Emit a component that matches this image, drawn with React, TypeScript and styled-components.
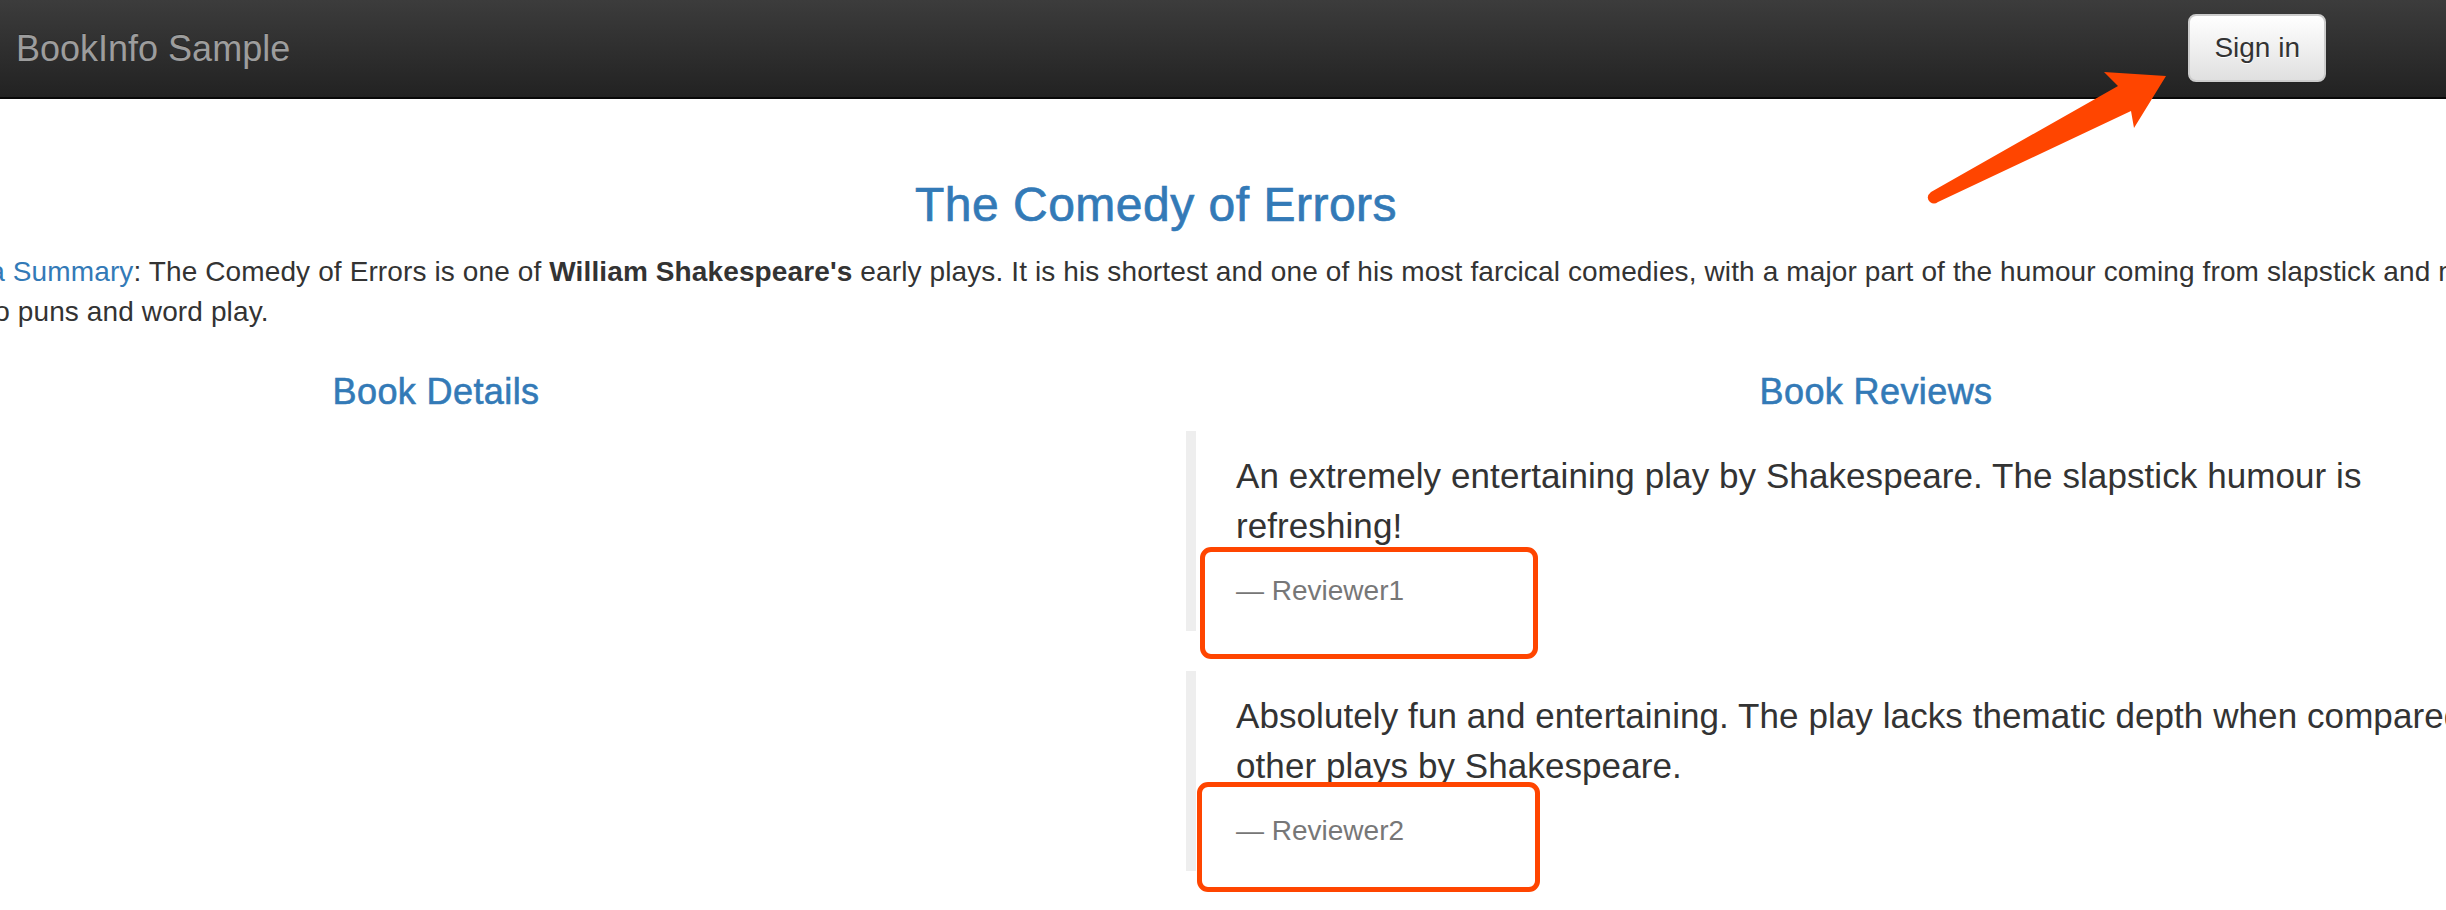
import React from "react";
import styled, { createGlobalStyle } from "styled-components";

const GlobalStyle = createGlobalStyle`
  html, body {
    margin: 0;
    padding: 0;
    background: #ffffff;
  }
  body {
    font-family: "Liberation Sans", Arial, Helvetica, sans-serif;
    color: #333333;
    font-size: 28px;
    line-height: 40px;
  }
  * { box-sizing: border-box; }
`;

const Root = styled.div`
  position: relative;
  width: 100%;
  height: 910px;
  overflow: hidden;
  background: #ffffff;
`;

const Navbar = styled.nav`
  display: flex;
  justify-content: space-between;
  align-items: flex-start;
  height: 99px;
  background-image: linear-gradient(to bottom, #3c3c3c 0%, #222222 100%);
  border-bottom: 2px solid #080808;
  margin-bottom: 40px;
`;

const Brand = styled.a`
  display: block;
  padding: 29px 30px 0 16px;
  font-size: 36px;
  line-height: 40px;
  color: #9d9d9d;
  text-decoration: none;
  text-shadow: 0 -1px 0 rgba(0, 0, 0, 0.25);
`;

const SignInButton = styled.button`
  margin: 14px 120px 0 0;
  height: 68px;
  padding: 0 24px;
  font-family: inherit;
  font-size: 28px;
  line-height: 40px;
  color: #333333;
  background-image: linear-gradient(to bottom, #ffffff 0%, #e0e0e0 100%);
  border: 2px solid #cccccc;
  border-radius: 8px;
  text-shadow: 0 1px 0 #ffffff;
  box-shadow: inset 0 1px 0 rgba(255, 255, 255, 0.15), 0 1px 2px rgba(0, 0, 0, 0.075);
  cursor: pointer;
`;

const Page = styled.main`
  width: 2880px;
  margin-left: -284px;
  padding: 0 30px;
`;

const Row = styled.div`
  display: flex;
  margin: 0 -30px;
`;

const Col = styled.div<{ $span: number }>`
  flex: 0 0 ${(p) => (p.$span / 12) * 100}%;
  padding: 0 30px;
`;

const Title = styled.h3`
  margin: 40px 0 20px;
  font-size: 48px;
  line-height: 52.8px;
  font-weight: 500;
  color: #337ab7;
  text-align: center;
  letter-spacing: 0.5px;
  -webkit-text-stroke: 0.7px #337ab7;
`;

const Summary = styled.p`
  margin: 0 0 20px;
  font-size: 28px;
  line-height: 40px;
  letter-spacing: 0.12px;
`;

const SummaryLink = styled.a`
  color: #337ab7;
  text-decoration: none;
`;

const SectionHeading = styled.h4`
  margin: 20px 0 20px;
  font-size: 36px;
  line-height: 39.6px;
  font-weight: 500;
  color: #337ab7;
  text-align: center;
  letter-spacing: 0.4px;
  -webkit-text-stroke: 0.6px #337ab7;
`;

const Review = styled.blockquote`
  margin: 0 0 40px;
  padding: 20px 40px;
  border-left: 10px solid #eeeeee;
  font-size: 35px;
`;

const ReviewText = styled.p`
  margin: 0 0 20px;
  line-height: 50px;
  letter-spacing: 0.08px;
`;

const ReviewAuthor = styled.small`
  display: block;
  font-size: 28px;
  line-height: 40px;
  color: #777777;
  &::before {
    content: "\\2014 \\00A0";
  }
`;

const AnnotationArrow = styled.svg`
  position: absolute;
  left: 0;
  top: 0;
  width: 2446px;
  height: 910px;
  pointer-events: none;
`;

const AnnotationBox = styled.div<{ $left: number; $top: number; $width: number; $height: number }>`
  position: absolute;
  left: ${(p) => p.$left}px;
  top: ${(p) => p.$top}px;
  width: ${(p) => p.$width}px;
  height: ${(p) => p.$height}px;
  border: 5px solid #ff4500;
  border-radius: 11px;
  pointer-events: none;
`;

const reviews = [
  {
    text: "An extremely entertaining play by Shakespeare. The slapstick humour is refreshing!",
    author: "Reviewer1",
  },
  {
    text: "Absolutely fun and entertaining. The play lacks thematic depth when compared to other plays by Shakespeare.",
    author: "Reviewer2",
  },
];

export default function App() {
  return (
    <>
      <GlobalStyle />
      <Root>
        <Navbar>
          <Brand href="#">BookInfo Sample</Brand>
          <SignInButton type="button">Sign in</SignInButton>
        </Navbar>
        <Page>
          <Row>
            <Col $span={12}>
              <Title>The Comedy of Errors</Title>
              <Summary>
                Summary:{" "}
                <SummaryLink href="#">Wikipedia Summary</SummaryLink>: The Comedy of Errors is one of{" "}
                <b>William Shakespeare's</b> early plays. It is his shortest and one of his most farcical
                comedies, with a major part of the humour coming from slapstick and mistaken identity, in
                addition to puns and word play.
              </Summary>
            </Col>
          </Row>
          <Row>
            <Col $span={6}>
              <SectionHeading>Book Details</SectionHeading>
            </Col>
            <Col $span={6}>
              <SectionHeading>Book Reviews</SectionHeading>
              {reviews.map((r) => (
                <Review key={r.author}>
                  <ReviewText>{r.text}</ReviewText>
                  <ReviewAuthor>{r.author}</ReviewAuthor>
                </Review>
              ))}
            </Col>
          </Row>
        </Page>
        <AnnotationArrow viewBox="0 0 2446 910">
          <path
            d="M2166 76 L2104 72 L2118 86 L1931 192 Q1925 197 1930 202 Q1934 205 1938 202 L2131 111 L2134 128 Z"
            fill="#ff4500"
          />
        </AnnotationArrow>
        <AnnotationBox $left={1200} $top={547} $width={338} $height={112} />
        <AnnotationBox $left={1197} $top={782} $width={343} $height={110} />
      </Root>
    </>
  );
}
